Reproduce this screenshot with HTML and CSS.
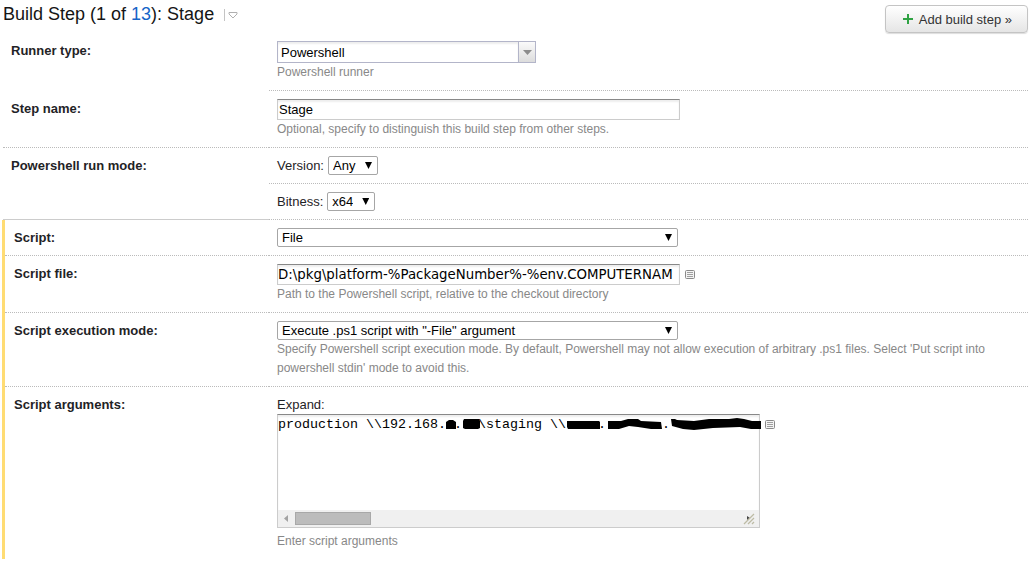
FILE: index.html
```html
<!DOCTYPE html>
<html lang="en">
<head>
    <meta charset="UTF-8">
    <meta name="viewport" content="width=device-width, initial-scale=1.0">
    <title>Build Step: Stage</title>
    <link rel="stylesheet" href="styles.css">
</head>
<body>
    <header class="header">
        <h1>Build Step (1 of <a href="#steps">13</a>): Stage</h1>
        <button type="button" class="step-menu" aria-label="Select build step">
            <svg width="10" height="7" viewBox="0 0 10 7"><path d="M1 .5h8v1.500L5 6 1 2z" fill="#fff" stroke="#b0b0b0"/></svg>
        </button>
        <button type="button" class="add-step">
            <svg width="10" height="10" viewBox="0 0 10 10"><path d="M4 0h2v4h4v2H6v4H4V6H0V4h4z" fill="#2fa343"/></svg>
            Add build step »
        </button>
    </header>

    <form class="settings">
        <div class="row">
            <label class="name no-line" for="runner">Runner type:</label>
            <div class="field">
                <div class="combo">
                    <input type="text" id="runner" value="Powershell">
                    <button type="button" aria-label="Show runners">
                        <svg width="9" height="5" viewBox="0 0 9 5"><path d="M0 0h9L4.5 5z" fill="#8c8c8c"/></svg>
                    </button>
                </div>
                <p class="hint">Powershell runner</p>
            </div>
        </div>

        <div class="row">
            <label class="name" for="step-name">Step name:</label>
            <div class="field">
                <input type="text" class="text" id="step-name" value="Stage">
                <p class="hint">Optional, specify to distinguish this build step from other steps.</p>
            </div>
        </div>

        <div class="row">
            <div class="name solid-line">Powershell run mode:</div>
            <div>
                <div class="field inline">
                    <label for="version">Version:</label>
                    <span class="select"><select id="version"><option>Any</option></select></span>
                </div>
                <div class="field inline">
                    <label for="bitness">Bitness:</label>
                    <span class="select"><select id="bitness"><option>x64</option></select></span>
                </div>
            </div>
        </div>

        <!-- Changed settings -->
        <div class="changed">
            <div class="row">
                <label class="name" for="script">Script:</label>
                <div class="field">
                    <span class="select wide"><select id="script"><option>File</option></select></span>
                </div>
            </div>

            <div class="row">
                <label class="name" for="script-file">Script file:</label>
                <div class="field">
                    <div class="with-icon">
                        <input type="text" class="path" id="script-file" value="D:\pkg\platform-%PackageNumber%-%env.COMPUTERNAM">
                        <button type="button" class="params" aria-label="Pick parameter for script file">
                            <svg width="10" height="9" viewBox="0 0 10 9"><rect x=".5" y=".5" width="9" height="8" rx="1" fill="#f4f4f4" stroke="#8a8a8a"/><path d="M2 2.5h6M2 4.5h6M2 6.5h6" stroke="#a0a0a0"/></svg>
                        </button>
                    </div>
                    <p class="hint">Path to the Powershell script, relative to the checkout directory</p>
                </div>
            </div>

            <div class="row">
                <label class="name" for="mode">Script execution mode:</label>
                <div class="field">
                    <span class="select wide"><select id="mode"><option>Execute .ps1 script with "-File" argument</option></select></span>
                    <p class="hint">Specify Powershell script execution mode. By default, Powershell may not allow execution of arbitrary .ps1 files. Select 'Put script into powershell stdin' mode to avoid this.</p>
                </div>
            </div>

            <div class="row last">
                <label class="name" for="arguments">Script arguments:</label>
                <div class="field">
                    <div class="expand">Expand:</div>
                    <div class="with-icon">
                        <div class="area">
                            <textarea id="arguments" wrap="off" spellcheck="false">production \\192.168. .  \staging \\    .       .</textarea>
                            <svg class="marker" width="484" height="20" viewBox="0 0 484 20">
                                <path d="M169 7L172 5H176L179 7V14H169z"/>
                                <path d="M187 4H202L203 6V13L201 14H188L186 13V6z"/>
                                <path d="M290 6H322L323 7V14H291L290 12z"/>
                                <path d="M331 6L344 6 351 4 361 4 364 6 384 7 385 14 374 14 361 12 352 11 342 14 331 14z"/>
                                <path d="M394 4L398 4 400 5 417 6 432 4 452 4 460 3 467 4 475 6 484 6 484 14 474 14 463 12 436 13 417 15 406 14 395 11z"/>
                            </svg>
                            <div class="scrollbar">
                                <svg class="arrow" width="4" height="7" viewBox="0 0 4 7"><path d="M4 0v7L0 3.500z" fill="#a3a3a3"/></svg>
                                <div class="thumb"></div>
                                <svg class="grip" width="12" height="12" viewBox="0 0 12 12"><path d="M4 3l3 2-3 2z" fill="#444"/><path d="M1 11L11 1M5 11l6-6M9 11l2-2" stroke="#bdbba5" stroke-width="1.300"/></svg>
                            </div>
                        </div>
                        <button type="button" class="params" aria-label="Pick parameter for arguments">
                            <svg width="10" height="9" viewBox="0 0 10 9"><rect x=".5" y=".5" width="9" height="8" rx="1" fill="#f4f4f4" stroke="#8a8a8a"/><path d="M2 2.5h6M2 4.5h6M2 6.5h6" stroke="#a0a0a0"/></svg>
                        </button>
                    </div>
                    <p class="hint spaced">Enter script arguments</p>
                </div>
            </div>
        </div>
    </form>
</body>
</html>
```
FILE: styles.css
```css
/* General Styles */
* {
    box-sizing: border-box;
}

body {
    margin: 0;
    padding: 0 5px 0 3px;
    background-color: #fff;
    color: #1f2326;
    font-family: "Liberation Sans", Arial, sans-serif;
    font-size: 13px;
    line-height: 19px;
}

button {
    padding: 0;
    border: none;
    background: none;
    cursor: pointer;
}

svg {
    display: block;
}

/* Header */
.header {
    display: flex;
    align-items: flex-start;
    padding-top: 5px;
}

h1 {
    margin: 0;
    font-size: 18px;
    font-weight: normal;
    line-height: 19px;
    color: #151515;
}

h1 a {
    color: #1564c8;
    text-decoration: none;
}

.step-menu {
    margin: 4px 0 0 10px;
    padding: 3px 0 2px 3px;
    border-left: 1px solid #c4c4c4;
}

.add-step {
    display: flex;
    align-items: center;
    gap: 6px;
    height: 28px;
    margin-left: auto;
    padding: 0 15px 0 17px;
    border: 1px solid #c4c4c4;
    border-radius: 4px;
    background: linear-gradient(#fff, #e5e5e5);
    box-shadow: 0 1px 1px #ddd;
    color: #333;
    font-family: inherit;
    font-size: 13px;
}

/* Rows */
.row {
    display: grid;
    grid-template-columns: 266px 1fr;
}

.name {
    padding: 8px;
    border-bottom: 1px dotted #bbb;
    font-weight: bold;
}

.name.no-line {
    border-bottom: none;
}

.name.solid-line {
    border-bottom: 1px solid #ccc;
}

.field {
    padding: 8px;
    border-bottom: 1px dotted #bbb;
}

.field.inline {
    display: flex;
    gap: 4px;
}

.hint {
    margin: 0;
    color: #888;
    font-size: 12px;
}

.hint.spaced {
    margin-top: 4px;
}

.changed {
    margin-left: -1px;
    border-left: 3px solid #ffdc73;
}

.changed .row {
    grid-template-columns: 264px 1fr;
}

.changed .name {
    padding-left: 9px;
}

.last .name,
.last .field {
    border-bottom: none;
}

/* Text fields */
.text,
.path {
    display: block;
    width: 403px;
    max-width: 100%;
    height: 21px;
    padding: 0 1px;
    border: 1px solid #ccc;
    border-top-color: #888;
    box-shadow: inset 0 2px 2px #eee;
    color: #000;
}

.text {
    font-family: inherit;
    font-size: 13px;
}

.path {
    padding: 0;
    font-family: "DejaVu Sans", Verdana, sans-serif;
}

.combo {
    display: flex;
    width: 259px;
    height: 22px;
    border: 1px solid #b3b5c9;
}

.combo input {
    flex: 1;
    min-width: 0;
    padding: 0 3px;
    border: none;
    box-shadow: inset 0 2px 2px #eee;
    color: #000;
    font-family: inherit;
    font-size: 13px;
}

.combo button {
    display: flex;
    align-items: center;
    justify-content: center;
    width: 17px;
    border-left: 1px solid #b3b5c9;
    background: linear-gradient(#fafafa, #dcdcdc);
}

/* Selects */
.select {
    display: block;
    position: relative;
}

.select select {
    display: block;
    width: 100%;
    height: 19px;
    padding: 0 21px 0 4px;
    border: 1px solid #a6a6a6;
    border-radius: 2px;
    appearance: none;
    background-color: #fff;
    color: #000;
    font-family: inherit;
    font-size: 13px;
}

.select::after {
    content: "";
    position: absolute;
    top: 6px;
    right: 6px;
    width: 7px;
    height: 7px;
    background-color: #000;
    clip-path: polygon(0 0, 100% 0, 50% 100%);
    pointer-events: none;
}

.select.wide {
    width: 401px;
    max-width: 100%;
}

/* Script arguments */
.with-icon {
    display: flex;
    align-items: flex-start;
    gap: 5px;
}

.params {
    padding-top: 6px;
}

.area {
    position: relative;
    width: 483px;
    border: 1px solid #ccc;
    border-top-color: #888;
}

.area textarea {
    display: block;
    width: 100%;
    height: 95px;
    padding: 2px 0;
    border: none;
    outline: none;
    resize: none;
    overflow: hidden;
    box-shadow: inset 0 2px 2px #eee;
    color: #000;
    font-family: "Liberation Mono", monospace;
}

.marker {
    position: absolute;
    top: 0;
    left: -1px;
    pointer-events: none;
}

.scrollbar {
    display: flex;
    align-items: center;
    height: 17px;
    padding: 0 4px 0 6px;
    background-color: #f0f0f0;
}

.thumb {
    width: 76px;
    height: 13px;
    margin-left: 7px;
    border: 1px solid #a8a8a8;
    background-color: #bcbcbc;
}

.grip {
    margin-left: auto;
}
```
